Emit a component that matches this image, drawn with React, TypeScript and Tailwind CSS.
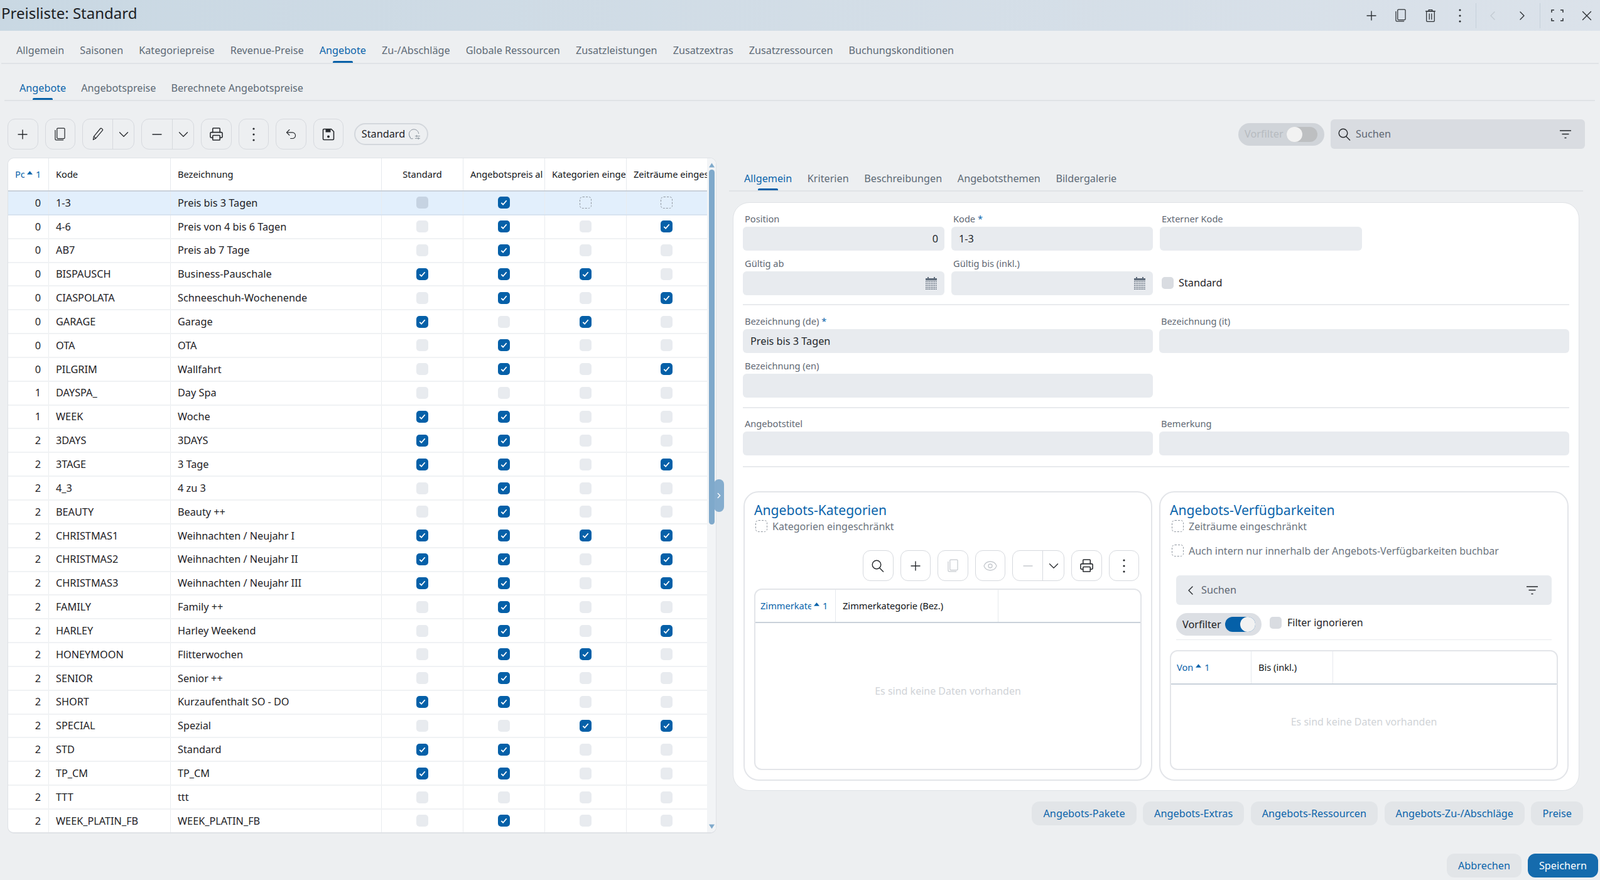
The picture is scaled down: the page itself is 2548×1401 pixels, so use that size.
import type { ReactNode } from 'react'
import { Plus, ChevronLeft, ChevronRight, ChevronDown, X, Minus, Printer, Undo2, Eye } from 'lucide-react'

const FONT = "font-['Open_Sans',sans-serif]"

type Row = { pos: number; code: string; name: string; std?: boolean; price?: boolean; cat?: boolean; time?: boolean }

const rows: Row[] = [
  { pos: 0, code: '1-3', name: 'Preis bis 3 Tagen', price: true },
  { pos: 0, code: '4-6', name: 'Preis von 4 bis 6 Tagen', price: true, time: true },
  { pos: 0, code: 'AB7', name: 'Preis ab 7 Tage', price: true },
  { pos: 0, code: 'BISPAUSCH', name: 'Business-Pauschale', std: true, price: true, cat: true },
  { pos: 0, code: 'CIASPOLATA', name: 'Schneeschuh-Wochenende', price: true, time: true },
  { pos: 0, code: 'GARAGE', name: 'Garage', std: true, cat: true },
  { pos: 0, code: 'OTA', name: 'OTA', price: true },
  { pos: 0, code: 'PILGRIM', name: 'Wallfahrt', price: true, time: true },
  { pos: 1, code: 'DAYSPA_', name: 'Day Spa' },
  { pos: 1, code: 'WEEK', name: 'Woche', std: true, price: true },
  { pos: 2, code: '3DAYS', name: '3DAYS', std: true, price: true },
  { pos: 2, code: '3TAGE', name: '3 Tage', std: true, price: true, time: true },
  { pos: 2, code: '4_3', name: '4 zu 3', price: true },
  { pos: 2, code: 'BEAUTY', name: 'Beauty ++', price: true },
  { pos: 2, code: 'CHRISTMAS1', name: 'Weihnachten / Neujahr I', std: true, price: true, cat: true, time: true },
  { pos: 2, code: 'CHRISTMAS2', name: 'Weihnachten / Neujahr II', std: true, price: true, time: true },
  { pos: 2, code: 'CHRISTMAS3', name: 'Weihnachten / Neujahr III', std: true, price: true, time: true },
  { pos: 2, code: 'FAMILY', name: 'Family ++', price: true },
  { pos: 2, code: 'HARLEY', name: 'Harley Weekend', price: true, time: true },
  { pos: 2, code: 'HONEYMOON', name: 'Flitterwochen', price: true, cat: true },
  { pos: 2, code: 'SENIOR', name: 'Senior ++', price: true },
  { pos: 2, code: 'SHORT', name: 'Kurzaufenthalt SO - DO', std: true, price: true },
  { pos: 2, code: 'SPECIAL', name: 'Spezial', cat: true, time: true },
  { pos: 2, code: 'STD', name: 'Standard', std: true, price: true },
  { pos: 2, code: 'TP_CM', name: 'TP_CM', std: true, price: true },
  { pos: 2, code: 'TTT', name: 'ttt' },
  { pos: 2, code: 'WEEK_PLATIN_FB', name: 'WEEK_PLATIN_FB', price: true },
]

function FilterLines({ className = '' }: { className?: string }) {
  return (
    <svg viewBox="0 0 20 14" className={`w-[20px] h-[14px] ${className}`} fill="none" stroke="currentColor" strokeWidth="1.4">
      <path d="M1 1h18M4.5 6.5h11M8.5 12.5h3" />
    </svg>
  )
}

function SaveIcon() {
  return (
    <svg viewBox="0 0 20 20" className="w-[20px] h-[20px]" fill="none" stroke="currentColor" strokeWidth="1.6">
      <path d="M3 1.5h11.5l4 4V17a1.5 1.5 0 0 1-1.5 1.5H3A1.5 1.5 0 0 1 1.5 17V3A1.5 1.5 0 0 1 3 1.5z" strokeLinejoin="round" />
      <path d="M5.5 2h8v4.5h-8z" fill="currentColor" stroke="none" />
      <circle cx="10" cy="13.5" r="2" fill="currentColor" stroke="none" />
    </svg>
  )
}

function PresetIcon() {
  return (
    <svg viewBox="0 0 22 20" className="w-[20px] h-[18px] text-[#8a949e]" fill="none" stroke="currentColor" strokeWidth="1.1">
      <path d="M4 15.5A8.5 8.5 0 1 1 18.5 9" />
      <path d="M2 12.5l2.5 5h4M12 13h9M12 17h9M15 11v4M18 15v4" />
    </svg>
  )
}

function CopyIcon() {
  return (
    <svg viewBox="0 0 18 22" className="w-[17px] h-[21px]" fill="none" stroke="currentColor" strokeWidth="1.3">
      <rect x="4" y="1" width="13" height="17.5" rx="1.5" />
      <path d="M1 4v15.5A1.5 1.5 0 0 0 2.5 21H15" />
    </svg>
  )
}

function TrashIcon() {
  return (
    <svg viewBox="0 0 20 24" className="w-[18px] h-[22px]" fill="none" stroke="currentColor" strokeWidth="1.4">
      <rect x="3" y="4" width="14" height="18.5" rx="1.5" />
      <path d="M1 4h18M7 4V1.5h6V4M8 8v11M12 8v11" />
    </svg>
  )
}

function DotsIcon() {
  return (
    <svg viewBox="0 0 6 24" className="w-[6px] h-[24px]" fill="currentColor">
      <circle cx="3" cy="3" r="1.6" />
      <circle cx="3" cy="12" r="1.6" />
      <circle cx="3" cy="21" r="1.6" />
    </svg>
  )
}

function PenIcon() {
  return (
    <svg viewBox="0 0 20 22" className="w-[19px] h-[21px]" fill="none" stroke="currentColor" strokeWidth="1.3" strokeLinejoin="round">
      <path d="M2.5 20.5l1-5.5L14.5 1.8a1.5 1.5 0 0 1 2.1-.2l1.3 1.1a1.5 1.5 0 0 1 .2 2.1L7 18z" />
      <path d="M3.5 15l3.5 3" />
    </svg>
  )
}

function SearchIcon() {
  return (
    <svg viewBox="0 0 20 20" className="w-[20px] h-[20px]" fill="none" stroke="currentColor" strokeWidth="1.4">
      <circle cx="8" cy="8" r="6.8" />
      <path d="M12.5 13l6.5 6.5" />
    </svg>
  )
}

function CalendarIcon() {
  return (
    <svg viewBox="0 0 18 20" className="ml-auto w-[18px] h-[20px] text-[#5f6c7b]" fill="currentColor">
      <path d="M0 2h3V0h2v2h8V0h2v2h3v3.5H0z" />
      <path d="M0 7.5h18M0 10.5h18M0 13.5h18M0 16.5h18M0 19.2h18" stroke="currentColor" strokeWidth="1.6" strokeDasharray="1.7 0.95" fill="none" />
    </svg>
  )
}

function ToolBtn({ children, dim = false }: { children: ReactNode; dim?: boolean }) {
  return (
    <div className={`w-[48.5px] h-[49px] shrink-0 flex items-center justify-center rounded-[12px] border border-[#d6d9de] ${dim ? 'text-[#c5c9ce]' : 'text-[#25282c]'}`}>
      {children}
    </div>
  )
}

function SplitBtn({ children, w, dim = false }: { children: ReactNode; w: string; dim?: boolean }) {
  return (
    <div className={`${w} h-[49px] shrink-0 flex rounded-[12px] border border-[#d6d9de]`}>
      <div className={`flex-1 flex items-center justify-center border-r border-[#d6d9de] ${dim ? 'text-[#c5c9ce]' : 'text-[#25282c]'}`}>{children}</div>
      <div className="w-[33px] flex items-center justify-center text-[#25282c]">
        <ChevronDown size={26} strokeWidth={1.15} />
      </div>
    </div>
  )
}

function Check({ on, dashed, soft }: { on?: boolean; dashed?: boolean; soft?: boolean }) {
  if (on) {
    return (
      <div className="w-[19px] h-[19px] shrink-0 rounded-[5px] bg-[#0560a8] flex items-center justify-center">
        <svg viewBox="0 0 14 14" className="w-[13px] h-[13px]" fill="none" stroke="#ffffff" strokeWidth="2">
          <path d="M2.5 7.5l3 3 6-7" />
        </svg>
      </div>
    )
  }
  if (dashed) return <div className="w-[19px] h-[19px] shrink-0 rounded-[5px] border border-dashed border-[#8e959e]" />
  return <div className={`w-[19px] h-[19px] shrink-0 rounded-[5px] ${soft ? 'bg-[#c6d3e2]' : 'bg-[#e8ebef]'}`} />
}

function Tab({ label, active, pad = 'pt-[12px]' }: { label: string; active?: boolean; pad?: string }) {
  return (
    <div className={`relative h-full flex items-center whitespace-nowrap text-[16.2px] ${pad} ${active ? 'text-[#0a64ab]' : 'text-[#5d6a76]'}`}>
      {label}
      {active && <div className="absolute bottom-0 left-1/2 -translate-x-1/2 w-[32px] h-[3px] rounded-t-[2px] bg-[#0560a8]" />}
    </div>
  )
}

function Sort({ label, narrow }: { label: string; narrow?: string }) {
  return (
    <div className="flex items-center text-[#0a64ab] whitespace-nowrap">
      <span className={`overflow-hidden ${narrow ?? ''}`}>{label}</span>
      <svg viewBox="0 0 10 6" className="w-[9px] h-[6px] ml-[4px] mb-[6px]" fill="#0a64ab"><path d="M5 0l5 6H0z" /></svg>
      <span className="ml-[5px]">1</span>
    </div>
  )
}

function Field({ label, star, value, children, right }: { label: string; star?: boolean; value?: string; children?: ReactNode; right?: boolean }) {
  return (
    <div className="min-w-0">
      <div className="h-[25px] pl-[3px] text-[14.625px] leading-[24px] text-[#5f6873] whitespace-nowrap">
        {label}
        {star && <span className="text-[#0a64ab]"> *</span>}
      </div>
      <div className={`h-[38px] rounded-[6px] bg-[#e8ebef] flex items-center text-[16.25px] text-[#24282c] ${right ? 'justify-end pr-[10px]' : 'px-[12px]'}`}>
        {value}
        {children}
      </div>
    </div>
  )
}

function Hr({ className = '' }: { className?: string }) {
  return <div className={`h-[2px] bg-[#e8eaed] ${className}`} />
}

function Empty() {
  return <div className="flex-1 pb-[16px] flex items-center justify-center text-[16px] text-[#d0d3d7]">Es sind keine Daten vorhanden</div>
}

function Pill({ label, primary }: { label: string; primary?: boolean }) {
  return (
    <div className={`h-[38px] flex items-center justify-center rounded-[12px] px-[18px] text-[16.25px] whitespace-nowrap ${primary ? 'bg-[#156bad] text-white' : 'bg-[#e2e5e8] text-[#0a64ab]'}`}>
      {label}
    </div>
  )
}

export default function App() {
  return (
    <div className={`${FONT} w-[2548px] h-[1401px] overflow-hidden bg-[#edeff1] text-[#1d2125] text-[16.25px] flex flex-col`}>
      {/* title bar */}
      <div className="h-[49px] shrink-0 flex items-center pl-[2px] pr-[1px] bg-gradient-to-r from-[#c9d8e3] to-[#dbe2ea]">
        <div className="text-[24px] leading-none text-[#1c2024] mb-[7px]">Preisliste: Standard</div>
        <div className="ml-auto flex items-center h-full text-[#2c3034]">
          <div className="w-[47px] flex justify-center"><Plus size={24} strokeWidth={1.4} /></div>
          <div className="w-[47px] flex justify-center"><CopyIcon /></div>
          <div className="w-[47px] flex justify-center"><TrashIcon /></div>
          <div className="w-[47px] mr-[2px] flex justify-center"><DotsIcon /></div>
          <div className="w-px h-[40px] bg-[#c5d0da]" />
          <div className="w-[52px] flex justify-center text-[#c2cad2]"><ChevronLeft size={24} strokeWidth={1.4} /></div>
          <div className="w-[49px] pr-[7px] flex justify-center"><ChevronRight size={24} strokeWidth={1.4} /></div>
          <div className="w-px h-[40px] bg-[#c5d0da]" />
          <div className="w-[54px] flex justify-center">
            <svg viewBox="0 0 20 19" className="w-[20px] h-[19px]" fill="none" stroke="currentColor" strokeWidth="1.5"><path d="M1 5V1h4M15 1h4v4M19 14v4h-4M5 18H1v-4" /></svg>
          </div>
          <div className="w-[40px] flex justify-center"><X size={26} strokeWidth={1.3} /></div>
        </div>
      </div>

      {/* main tabs */}
      <div className="h-[53px] shrink-0 mx-[2px] pl-[24px] flex items-center gap-[25.1px] border-b-2 border-[#e0e3e6]">
        <Tab label="Allgemein" />
        <Tab label="Saisonen" />
        <Tab label="Kategoriepreise" />
        <Tab label="Revenue-Preise" />
        <Tab label="Angebote" active />
        <Tab label="Zu-/Abschläge" />
        <Tab label="Globale Ressourcen" />
        <Tab label="Zusatzleistungen" />
        <Tab label="Zusatzextras" />
        <Tab label="Zusatzressourcen" />
        <Tab label="Buchungskonditionen" />
      </div>

      {/* sub tabs */}
      <div className="h-[59px] shrink-0 ml-[7px] mr-[8px] pl-[24px] flex items-center gap-[24px] border-b-2 border-[#e0e3e6]">
        <Tab label="Angebote" active pad="pt-[19px]" />
        <Tab label="Angebotspreise" pad="pt-[19px]" />
        <Tab label="Berechnete Angebotspreise" pad="pt-[19px]" />
      </div>

      {/* toolbar */}
      <div className="h-[90px] shrink-0 pt-[15px] pl-[12px] pr-[24px] flex items-center gap-[11px]">
        <ToolBtn><Plus size={24} strokeWidth={1.4} /></ToolBtn>
        <ToolBtn><CopyIcon /></ToolBtn>
        <SplitBtn w="w-[83px]"><PenIcon /></SplitBtn>
        <SplitBtn w="w-[84px]"><Minus size={24} strokeWidth={1.4} /></SplitBtn>
        <ToolBtn><Printer size={23} strokeWidth={1.6} /></ToolBtn>
        <ToolBtn><DotsIcon /></ToolBtn>
        <ToolBtn><Undo2 size={21} strokeWidth={1.3} /></ToolBtn>
        <ToolBtn><SaveIcon /></ToolBtn>
        <div className="ml-[6px] h-[35px] w-[118px] rounded-full border-[2px] border-[#d3d7dc] flex items-center justify-center gap-[5px]">
          Standard <PresetIcon />
        </div>
        <div className="ml-auto h-[36px] w-[137px] rounded-full bg-[#d0d4d9] flex items-center pl-[10px] text-[#b7bbc0]">
          <span>Vorfilter</span>
          <div className="ml-auto mr-[11px] w-[49px] h-[24px] rounded-full bg-[#bdbfc1] relative">
            <div className="absolute left-0 top-0 w-[25px] h-[24px] rounded-full bg-[#f2f2f2]" />
          </div>
        </div>
        <div className="-ml-[1px] w-[405px] h-[47px] rounded-[6px] bg-[#d9dce1] flex items-center pl-[12px] pr-[21px] text-[#5f6873]">
          <span className="text-[#25282c] mr-[8px]"><SearchIcon /></span>
          Suchen
          <FilterLines className="ml-auto text-[#25282c]" />
        </div>
      </div>

      <div className="flex-1 min-h-0 flex">
        {/* left table */}
        <div className="ml-[12px] w-[1129px] h-[1076px] shrink-0 relative">
          <div className="h-full rounded-[10px] border border-b-2 border-[#dfe2e6] bg-white flex overflow-hidden">
            <div className="w-[1113px] shrink-0">
              <div className="h-[53px] grid grid-cols-[65px_194px_336px_130px_130px_130px_128px] border-b-2 border-[#c9d1da] text-[14.625px] text-[#111417]">
                <div className="flex items-center pl-[11px] border-r border-[#e6e9ed]"><Sort label="Position" narrow="w-[15px]" /></div>
                <div className="flex items-center pl-[11px] border-r border-[#e6e9ed]">Kode</div>
                <div className="flex items-center pl-[11px] border-r border-[#e6e9ed]">Bezeichnung</div>
                <div className="flex items-center justify-center border-r border-[#e6e9ed]">Standard</div>
                <div className="flex items-center pl-[11px] border-r border-[#e6e9ed] overflow-hidden whitespace-nowrap">Angebotspreis al</div>
                <div className="flex items-center pl-[11px] border-r border-[#e6e9ed] overflow-hidden whitespace-nowrap">Kategorien einge</div>
                <div className="flex items-center pl-[11px] overflow-hidden whitespace-nowrap">Zeiträume einges</div>
              </div>
              {rows.map((r, i) => (
                <div key={r.code} className={`h-[37.85px] grid grid-cols-[65px_194px_336px_130px_130px_130px_128px] border-b-2 ${i === 0 ? 'bg-[#e2effc] border-[#d7e3f0]' : 'border-[#f0f2f4]'}`}>
                  <div className="flex items-center justify-end pr-[12px] border-r border-[#e9ecef]">{r.pos}</div>
                  <div className="flex items-center pl-[11px] border-r border-[#e9ecef] whitespace-nowrap">{r.code}</div>
                  <div className="flex items-center pl-[11px] border-r border-[#e9ecef] whitespace-nowrap">{r.name}</div>
                  <div className="flex items-center justify-center border-r border-[#e9ecef]"><Check on={r.std} soft={i === 0} /></div>
                  <div className="flex items-center justify-center border-r border-[#e9ecef]"><Check on={r.price} /></div>
                  <div className="flex items-center justify-center border-r border-[#e9ecef]"><Check on={r.cat} dashed={i === 0} /></div>
                  <div className="flex items-center justify-center pr-[2px]"><Check on={r.time} dashed={i === 0} /></div>
                </div>
              ))}
            </div>
            {/* scrollbar */}
            <div className="w-[14px] shrink-0 bg-[#f2f4f6] flex flex-col items-center pt-[7px]">
              <svg viewBox="0 0 10 8" className="w-[9px] h-[8px]" fill="#7fa9cb"><path d="M5 0l5 8H0z" /></svg>
              <div className="mt-[3px] w-[9px] h-[565px] rounded-full bg-[#7fa9cb]" />
              <svg viewBox="0 0 10 8" className="mt-auto mb-[5px] w-[9px] h-[8px]" fill="#7fa9cb"><path d="M5 8l5-8H0z" /></svg>
            </div>
          </div>
          {/* collapse handle */}
          <div className="absolute left-[1125px] top-[512px] w-[16px] h-[52px] rounded-[8px] bg-[#7fa9cb]/95 flex items-center justify-center text-white">
            <ChevronRight size={14} strokeWidth={2.4} />
          </div>
        </div>

        {/* right side */}
        <div className="ml-[20px] w-[1387px] shrink-0 flex flex-col">
          <div className="h-[54px] shrink-0 mr-[27px] pl-[24px] flex items-center gap-[24.6px] border-b-2 border-[#e0e3e6]">
            <Tab label="Allgemein" active pad="pt-[14px]" />
            <Tab label="Kriterien" pad="pt-[14px]" />
            <Tab label="Beschreibungen" pad="pt-[14px]" />
            <Tab label="Angebotsthemen" pad="pt-[14px]" />
            <Tab label="Bildergalerie" pad="pt-[14px]" />
          </div>

          <div className="mt-[17px] ml-[6px] w-[1348px] h-[937px] rounded-[26px] bg-white border border-[#dfe2e6] px-[15px] pt-[13px]">
            <div className="grid grid-cols-[321px_321px_322px] gap-x-[11px]">
              <Field label="Position" value="0" right />
              <Field label="Kode" star value="1-3" />
              <Field label="Externer Kode" />
            </div>
            <div className="mt-[8px] grid grid-cols-[321px_321px_322px] gap-x-[11px]">
              <Field label="Gültig ab"><CalendarIcon /></Field>
              <Field label="Gültig bis (inkl.)"><CalendarIcon /></Field>
              <div className="flex items-end pb-[10px] pl-[3px] gap-[8px]">
                <div className="w-[19px] h-[19px] rounded-[5px] bg-[#d9dce1]" />
                <span className="leading-[19px]">Standard</span>
              </div>
            </div>
            <Hr className="mt-[14px]" />
            <div className="mt-[13px] grid grid-cols-[653px_653px] gap-x-[10px]">
              <Field label="Bezeichnung (de)" star value="Preis bis 3 Tagen" />
              <Field label="Bezeichnung (it)" />
            </div>
            <div className="mt-[8px] grid grid-cols-[653px_653px] gap-x-[10px]">
              <Field label="Bezeichnung (en)" />
            </div>
            <Hr className="mt-[15px]" />
            <div className="mt-[12px] grid grid-cols-[653px_653px] gap-x-[10px]">
              <Field label="Angebotstitel" />
              <Field label="Bemerkung" />
            </div>
            <Hr className="mt-[17px]" />

            <div className="mt-[38px] ml-[1px] grid grid-cols-[651px_652px] gap-x-[11px] h-[461px]">
              {/* Angebots-Kategorien */}
              <div className="rounded-[24px] border-2 border-[#e3e5e9] px-[15px] pt-[12px] flex flex-col">
                <div className="text-[21.125px] leading-[32px] text-[#0a64ab]">Angebots-Kategorien</div>
                <div className="flex items-center gap-[8px] h-[19px] ml-[2px] text-[16px] text-[#6b747e]">
                  <Check dashed />
                  <span>Kategorien eingeschränkt</span>
                </div>
                <div className="mt-[29px] flex justify-end gap-[11px] pr-[4px]">
                  <ToolBtn><SearchIcon /></ToolBtn>
                  <ToolBtn><Plus size={24} strokeWidth={1.4} /></ToolBtn>
                  <ToolBtn dim><CopyIcon /></ToolBtn>
                  <ToolBtn dim><Eye size={24} strokeWidth={1.3} /></ToolBtn>
                  <SplitBtn w="w-[83px]" dim><Minus size={24} strokeWidth={1.4} /></SplitBtn>
                  <ToolBtn><Printer size={23} strokeWidth={1.6} /></ToolBtn>
                  <ToolBtn><DotsIcon /></ToolBtn>
                </div>
                <div className="mt-[12px] mb-[15px] flex-1 rounded-[12px] border-2 border-[#e3e5e9] flex flex-col overflow-hidden">
                  <div className="h-[53px] shrink-0 grid grid-cols-[128px_259px_1fr] border-b-2 border-[#c9d1da] text-[14.625px] text-[#111417]">
                    <div className="flex items-center pl-[8px] border-r border-[#e6e9ed]"><Sort label="Zimmerkategorie" narrow="w-[81px]" /></div>
                    <div className="flex items-center pl-[11px] border-r border-[#e6e9ed]">Zimmerkategorie (Bez.)</div>
                    <div />
                  </div>
                  <Empty />
                </div>
              </div>

              {/* Angebots-Verfügbarkeiten */}
              <div className="rounded-[24px] border-2 border-[#e3e5e9] px-[15px] pt-[12px] flex flex-col">
                <div className="text-[21.125px] leading-[32px] text-[#0a64ab]">Angebots-Verfügbarkeiten</div>
                <div className="flex items-center gap-[8px] h-[19px] ml-[3px] text-[16px] text-[#6b747e]">
                  <Check dashed />
                  <span>Zeiträume eingeschränkt</span>
                </div>
                <div className="flex items-center gap-[8px] h-[19px] mt-[20px] ml-[3px] text-[16px] text-[#6b747e]">
                  <Check dashed />
                  <span>Auch intern nur innerhalb der Angebots-Verfügbarkeiten buchbar</span>
                </div>
                <div className="mx-[10px] mt-[30px] h-[47px] shrink-0 rounded-[6px] bg-[#e8ebef] flex items-center pl-[11px] pr-[21px] text-[#5f6873]">
                  <ChevronLeft size={24} strokeWidth={1.4} className="text-[#25282c] mr-[5px]" />
                  Suchen
                  <FilterLines className="ml-auto text-[#25282c]" />
                </div>
                <div className="mx-[10px] mt-[13px] flex items-start">
                  <div className="h-[36px] w-[136px] rounded-full bg-[#dcdfe4] flex items-center pl-[10px]">
                    <span>Vorfilter</span>
                    <div className="ml-auto mr-[10px] w-[48px] h-[24px] rounded-full bg-[#0560a8] relative">
                      <div className="absolute right-0 top-0 w-[24px] h-[24px] rounded-full bg-[#f2f2f2]" />
                    </div>
                  </div>
                  <div className="ml-[13px] mt-[6px] flex items-center gap-[9px] text-[16px] leading-[19px]">
                    <div className="w-[19px] h-[19px] rounded-[5px] bg-[#d9dce1]" />
                    <span>Filter ignorieren</span>
                  </div>
                </div>
                <Hr className="mx-[10px] mt-[6px] !h-px shrink-0" />
                <div className="mt-[16px] mb-[15px] flex-1 rounded-[12px] border-2 border-[#e3e5e9] flex flex-col overflow-hidden">
                  <div className="h-[53px] shrink-0 grid grid-cols-[128px_130px_1fr] border-b-2 border-[#c9d1da] text-[14.625px] text-[#111417]">
                    <div className="flex items-center pl-[9px] border-r border-[#e6e9ed]"><Sort label="Von" /></div>
                    <div className="flex items-center pl-[11px] border-r border-[#e6e9ed]">Bis (inkl.)</div>
                    <div />
                  </div>
                  <Empty />
                </div>
              </div>
            </div>
          </div>

          <div className="mt-[17px] mr-[27px] flex justify-end gap-[10.5px]">
            <Pill label="Angebots-Pakete" />
            <Pill label="Angebots-Extras" />
            <Pill label="Angebots-Ressourcen" />
            <Pill label="Angebots-Zu-/Abschläge" />
            <Pill label="Preise" />
          </div>
          <div className="mt-[45px] mr-[3px] flex justify-end gap-[10px]">
            <Pill label="Abbrechen" />
            <Pill label="Speichern" primary />
          </div>
        </div>
      </div>
    </div>
  )
}
